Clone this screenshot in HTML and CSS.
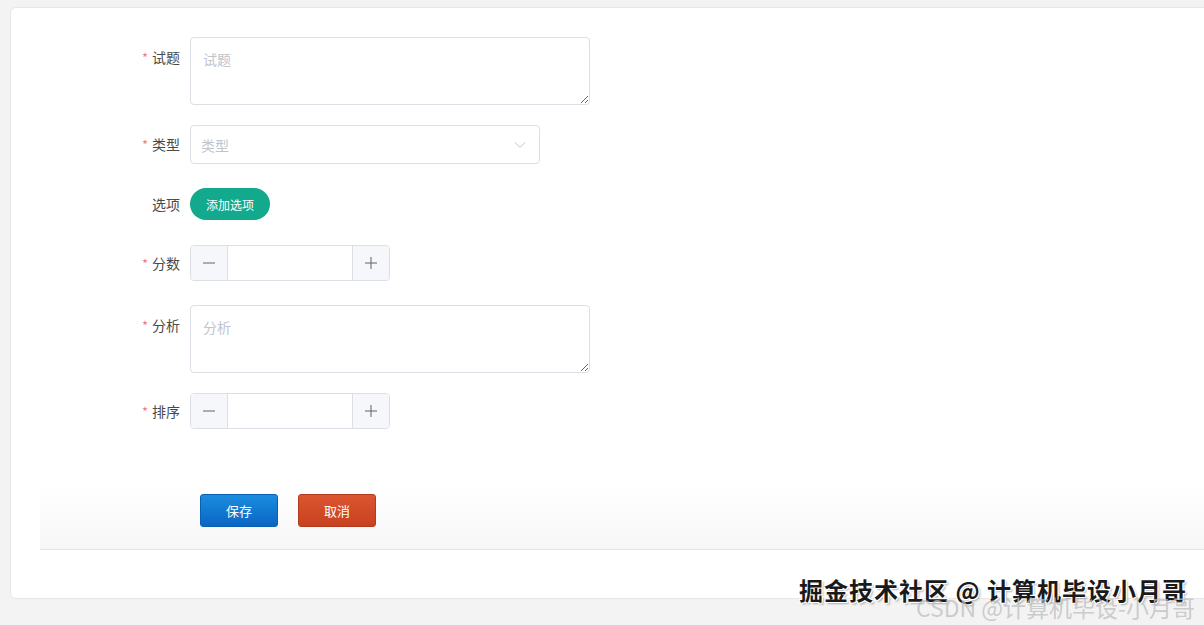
FILE: index.html
```html
<!DOCTYPE html>
<html lang="zh-CN">
<head>
<meta charset="utf-8">
<title>试题</title>
<link rel="stylesheet" href="styles.css">
</head>
<body>
<div class="card">
  <form class="form">
    <div class="row row-ta">
      <label class="label"><span class="req">*</span>试题</label>
      <textarea class="textarea" placeholder="试题"></textarea>
    </div>
    <div class="row row-select">
      <label class="label"><span class="req">*</span>类型</label>
      <div class="select">
        <span class="ph">类型</span>
        <svg class="chev" width="12" height="8" viewBox="0 0 12 8"><path d="M1 1.5 L6 6.5 L11 1.5" fill="none" stroke="#c0c4cc" stroke-width="1"/></svg>
      </div>
    </div>
    <div class="row row-btn">
      <label class="label">选项</label>
      <div class="ctl-center"><button type="button" class="add-btn">添加选项</button></div>
    </div>
    <div class="row row-num">
      <label class="label"><span class="req">*</span>分数</label>
      <div class="num">
        <span class="num-btn dec"><svg width="14" height="14" viewBox="0 0 14 14"><path d="M1 7 H13" stroke="#606266" stroke-width="1"/></svg></span>
        <span class="num-field"></span>
        <span class="num-btn inc"><svg width="14" height="14" viewBox="0 0 14 14"><path d="M1 7 H13 M7 1 V13" stroke="#606266" stroke-width="1"/></svg></span>
      </div>
    </div>
    <div class="row row-ta2">
      <label class="label"><span class="req">*</span>分析</label>
      <textarea class="textarea" placeholder="分析"></textarea>
    </div>
    <div class="row row-num">
      <label class="label"><span class="req">*</span>排序</label>
      <div class="num">
        <span class="num-btn dec"><svg width="14" height="14" viewBox="0 0 14 14"><path d="M1 7 H13" stroke="#606266" stroke-width="1"/></svg></span>
        <span class="num-field"></span>
        <span class="num-btn inc"><svg width="14" height="14" viewBox="0 0 14 14"><path d="M1 7 H13 M7 1 V13" stroke="#606266" stroke-width="1"/></svg></span>
      </div>
    </div>
  </form>
  <div class="footer">
    <button type="button" class="btn btn-save">保存</button>
    <button type="button" class="btn btn-cancel">取消</button>
  </div>
</div>
<div class="wm wm-juejin">掘金技术社区 @ 计算机毕设小月哥</div>
<div class="wm wm-csdn">CSDN @计算机毕设-小月哥</div>
</body>
</html>
```
FILE: styles.css
```css
html, body {
  margin: 0;
  padding: 0;
  height: 100%;
  overflow: hidden;
}
body {
  background: #f3f3f3;
  font-family: "Noto Sans CJK SC", "Noto Sans", sans-serif;
  position: relative;
}
.card {
  margin: 7px -20px 0 10px;
  height: 592px;
  background: #fff;
  border: 1px solid #e6e6e6;
  border-radius: 6px;
  box-sizing: border-box;
}
.form {
  padding: 29px 0 0 49px;
}
.row {
  display: flex;
  align-items: flex-start;
}
.row:last-child { margin-bottom: 0; }
.label {
  width: 130px;
  box-sizing: border-box;
  padding-right: 10px;
  text-align: right;
  font-size: 14px;
  color: #4a4a4a;
  line-height: 40px;
}
.req {
  color: #f08080;
  margin-right: 4px;
  font-size: 13px;
}
.textarea {
  width: 400px;
  height: 68px;
  box-sizing: border-box;
  border: 1px solid #dcdfe6;
  border-radius: 4px;
  padding: 11px 12px;
  font-family: inherit;
  font-size: 14px;
  line-height: 21px;
  color: #606266;
  resize: vertical;
  outline: none;
  margin: 0;
  display: block;
}
.textarea::placeholder {
  color: #c0c4cc;
}
.row-ta { margin-bottom: 20px; }
.row-select { margin-bottom: 20px; }
.row-select .label { line-height: 39px; }
.select {
  width: 350px;
  height: 39px;
  box-sizing: border-box;
  border: 1px solid #dcdfe6;
  border-radius: 4px;
  display: flex;
  align-items: center;
  justify-content: space-between;
  padding: 0 13px 0 10px;
}
.ph {
  font-size: 14px;
  color: #c0c4cc;
}
.row-btn { margin-bottom: 21px; height: 40px; }
.ctl-center {
  height: 40px;
  display: flex;
  align-items: center;
}
.add-btn {
  width: 80px;
  height: 32px;
  border: none;
  border-radius: 16px;
  background: #13a98c;
  color: #fff;
  font-family: inherit;
  font-size: 12px;
  padding: 0;
  cursor: pointer;
}
.row-num { margin-bottom: 23px; }
.row-num .label { line-height: 36px; }
.num {
  width: 200px;
  height: 36px;
  box-sizing: border-box;
  border: 1px solid #dcdfe6;
  border-radius: 4px;
  display: flex;
  overflow: hidden;
}
.num-btn {
  width: 36px;
  background: #f5f7fa;
  display: flex;
  align-items: center;
  justify-content: center;
}
.dec { border-right: 1px solid #dcdfe6; }
.inc { border-left: 1px solid #dcdfe6; }
.num-field { flex: 1; background: #fff; }
.row-ta2 { margin-bottom: 20px; }
.footer {
  margin: 40px 0 0 29px;
  height: 80px;
  box-sizing: border-box;
  border-bottom: 1px solid #e4e4e4;
  background: linear-gradient(to bottom, #ffffff 0%, #ffffff 20%, #f7f7f7 100%);
  padding: 24px 0 0 160px;
  display: flex;
  align-items: flex-start;
  gap: 20px;
}
.btn {
  width: 78px;
  height: 33px;
  border-radius: 3px;
  color: #fff;
  font-family: inherit;
  font-size: 13px;
  padding: 0;
  cursor: pointer;
}
.btn-save {
  background: linear-gradient(to bottom, #1b8ce0, #0a66c2);
  border: 1px solid #0b5fb3;
}
.btn-cancel {
  background: linear-gradient(to bottom, #dc5430, #c8421f);
  border: 1px solid #b13b1c;
}
.wm {
  position: absolute;
  white-space: nowrap;
  pointer-events: none;
}
.wm-juejin {
  left: 799px;
  top: 572px;
  font-size: 24px;
  font-weight: bold;
  color: #1a1a1a;
  text-shadow: 1px 1px 0 #fff, -1px -1px 0 #fff, 1px -1px 0 #fff, -1px 1px 0 #fff, 2px 2px 2px rgba(0,0,0,0.3);
  letter-spacing: 1px;
}
.wm-csdn {
  left: 916px;
  top: 590px;
  font-size: 23px;
  color: rgba(190,190,190,0.75);
}
```
